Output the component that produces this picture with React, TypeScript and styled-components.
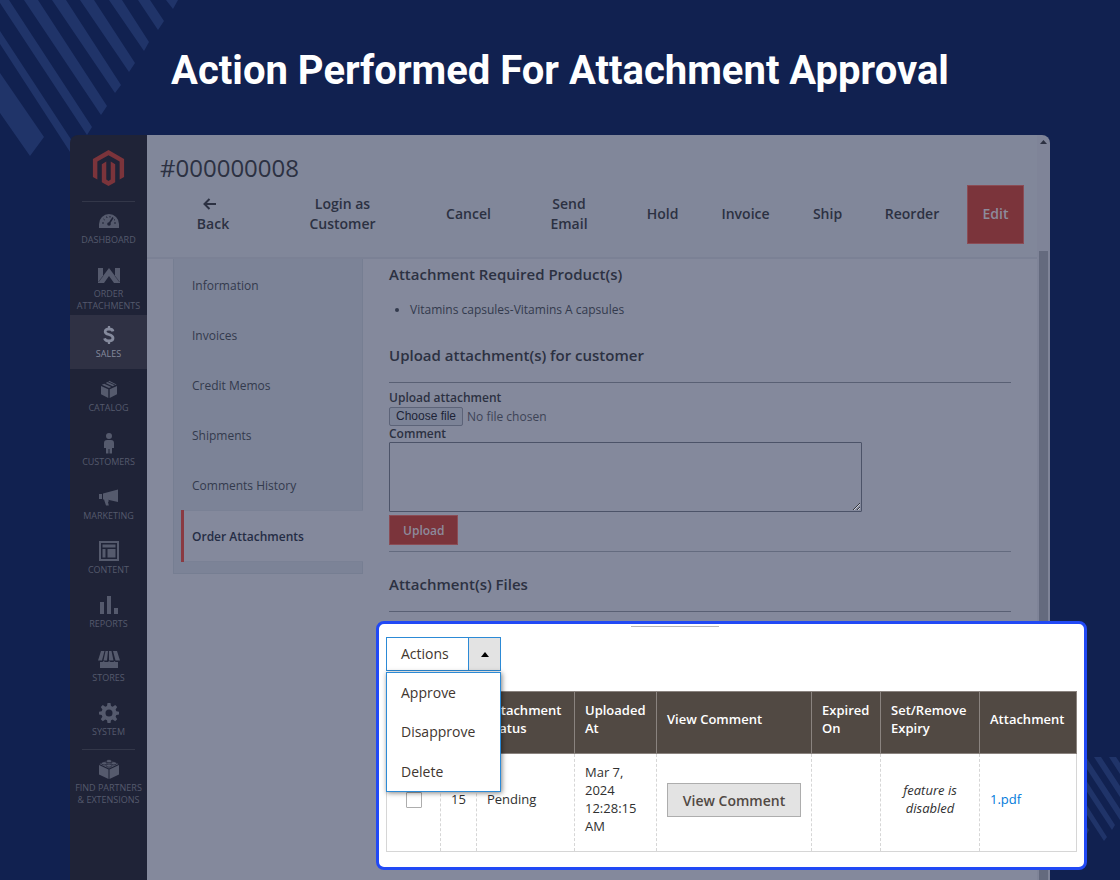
import React from "react";
import styled, { createGlobalStyle } from "styled-components";

const GlobalStyle = createGlobalStyle`
  * { box-sizing: border-box; }
  body { margin: 0; background: #112150; font-family: "Open Sans", "Noto Sans", sans-serif; }
  h1, h2, p, ul { margin: 0; padding: 0; }
  button { font-family: inherit; cursor: pointer; }
  a { text-decoration: none; }
`;

const Page = styled.div`
  position: relative;
  display: flex;
  flex-direction: column;
  min-height: 100vh;
  overflow: hidden;
`;

const Stripes = styled.svg<{ $corner: "start" | "end" }>`
  position: absolute;
  ${(p) => (p.$corner === "start" ? "left: 0; top: 0;" : "right: 0; top: 757px;")}
  fill: #203469;
`;

const Title = styled.h1`
  position: relative;
  padding: 47px 24px 40px;
  font: 700 40px/48px Roboto, sans-serif;
  color: #fff;
  text-align: center;
`;

const Shell = styled.div`
  position: relative;
  flex: 1;
  display: flex;
  margin: 0 70px;
`;

const Sidebar = styled.nav`
  flex: 0 0 77px;
  background: #1f2337;
  border-radius: 8px 0 0 0;
`;

const Logo = styled.a`
  display: flex;
  justify-content: center;
  height: 66px;
  padding-top: 15px;
  color: #7b343b;
`;

const Rule = styled.div`
  height: 1px;
  margin: 0 12px;
  background: #333749;
`;

const MenuItem = styled.a<{ $active?: boolean; $tight?: boolean }>`
  display: flex;
  flex-direction: column;
  align-items: center;
  height: 54px;
  padding-top: ${(p) => (p.$tight ? 3 : 9)}px;
  background: ${(p) => (p.$active ? "#2f3144" : "transparent")};
  color: ${(p) => (p.$active ? "#858a9d" : "#555a6d")};
  font-size: 9px;
  line-height: 12px;
  text-align: center;
  white-space: pre-line;
`;

const IconBox = styled.span`
  display: flex;
  align-items: center;
  height: 22px;
  margin-bottom: 2px;
`;

const MenuGroup = styled.div`
  padding: 5px 0 2px;
`;

const Workspace = styled.div`
  flex: 1;
  min-width: 0;
  background: #84899c;
`;

const Header = styled.header`
  height: 124px;
  padding: 16px 13px 0;
  background: #81879a;
  border-bottom: 2px solid #7b8195;
`;

const OrderTitle = styled.p`
  padding-bottom: 1px;
  font-size: 24px;
  line-height: 33px;
  color: #2c3142;
`;

const Toolbar = styled.div`
  display: flex;
  justify-content: flex-end;
  gap: 13px;
`;

const ToolButton = styled.button<{ $width: number; $primary?: boolean }>`
  display: flex;
  flex-direction: column;
  align-items: center;
  justify-content: center;
  width: ${(p) => p.$width}px;
  height: 59px;
  padding: 0 0 2px;
  border: 1px solid ${(p) => (p.$primary ? "#8b4c55" : "transparent")};
  background: ${(p) => (p.$primary ? "#7b343b" : "transparent")};
  color: ${(p) => (p.$primary ? "#8d8b9b" : "#2c3142")};
  font-size: 14px;
  font-weight: 600;
  line-height: 20px;
  white-space: pre-line;
`;

const ArrowBox = styled.span`
  display: flex;
  align-items: center;
  height: 20px;
  padding-right: 7px;
`;

const Body = styled.div`
  display: flex;
  gap: 26px;
  padding: 0 26px;
`;

const Tabs = styled.nav`
  flex: 0 0 190px;
  align-self: flex-start;
  padding: 1px 0 11px 7px;
  background: #7c8397;
  border: solid #767e92;
  border-width: 0 1px 1px;
`;

const Tab = styled.a<{ $active?: boolean }>`
  display: flex;
  align-items: center;
  height: ${(p) => (p.$active ? 52 : 50)}px;
  margin-right: ${(p) => (p.$active ? -1 : 0)}px;
  padding-left: 8px;
  border-left: 3px solid ${(p) => (p.$active ? "#8a3a42" : "transparent")};
  background: ${(p) => (p.$active ? "#84899c" : "transparent")};
  box-shadow: ${(p) => (p.$active ? "inset 0 1px #7a8195, inset 0 -1px #7a8195" : "none")};
  color: ${(p) => (p.$active ? "#252d45" : "#333a4d")};
  font-size: 12px;
  font-weight: ${(p) => (p.$active ? 600 : 400)};
`;

const Main = styled.main`
  flex: 1;
  min-width: 0;
  padding-top: 4px;
`;

const Heading = styled.h2<{ $ruled?: boolean }>`
  padding-bottom: ${(p) => (p.$ruled ? 16 : 0)}px;
  border-bottom: ${(p) => (p.$ruled ? "1px solid #596074" : "none")};
  color: #2c3142;
  font-size: 15px;
  font-weight: 600;
  line-height: 22px;
`;

const Products = styled.ul`
  margin: 15px 0 24px;
  padding-left: 21px;
  color: #333a4d;
  font-size: 12px;
  line-height: 20px;
`;

const Form = styled.form`
  display: flex;
  flex-direction: column;
  align-items: flex-start;
  margin-bottom: 21px;
  padding: 7px 0 6px;
  border-bottom: 1px solid #646b7f;
`;

const FieldLabel = styled.label`
  color: #2c3142;
  font-size: 12px;
  font-weight: 600;
  line-height: 16px;
`;

const FileRow = styled.div`
  display: flex;
  align-items: center;
  gap: 4px;
  height: 20px;
  color: #3d4356;
  font-size: 12px;
`;

const HiddenFile = styled.input`
  position: absolute;
  width: 1px;
  height: 1px;
  opacity: 0;
`;

const FileButton = styled.label`
  padding: 0 6px;
  border: 1px solid #5c6378;
  border-radius: 2px;
  background: #7c8397;
  color: #1c2338;
  font: 12px/17px "Liberation Sans", Arial, sans-serif;
`;

const CommentBox = styled.textarea`
  width: 76%;
  height: 70px;
  border: 1px solid #4c5368;
  border-radius: 1px;
  background: transparent;
`;

const UploadButton = styled.button`
  height: 30px;
  margin-top: 3px;
  padding: 0 13px;
  border: 1px solid #8b4c55;
  background: #7b343b;
  color: #8d8b9b;
  font-size: 12px;
  font-weight: 600;
`;

const Scrollbar = styled.div`
  display: flex;
  flex-direction: column;
  align-items: center;
  flex: 0 0 13px;
  gap: 107px;
  padding-top: 5px;
  background: #7f8498;
  border-radius: 0 8px 0 0;
`;

const Thumb = styled.div`
  flex: 1;
  width: 9px;
  background: #646a7e;
`;

const Card = styled.section`
  position: absolute;
  left: 306px;
  right: -37px;
  top: 486px;
  height: 249px;
  padding: 2px 9px 0 7px;
  border: 3px solid #2149f5;
  border-radius: 8px;
  background: #fff;
`;

const Handle = styled.div`
  width: 88px;
  height: 1px;
  margin-left: 245px;
  background: #b5b5b5;
`;

const ActionSelect = styled.div`
  position: relative;
  width: 115px;
  margin: 10px 0 20px;
`;

const ActionToggle = styled.button`
  display: flex;
  width: 100%;
  height: 34px;
  padding: 0;
  border: 1px solid #2c8ad6;
  background: #fff;
  color: #41362f;
  font-size: 14px;
  line-height: 32px;
`;

const ActionText = styled.span`
  flex: 1;
  padding-left: 14px;
  text-align: left;
`;

const Caret = styled.span`
  display: flex;
  align-items: center;
  justify-content: center;
  width: 32px;
  border-left: 1px solid #2c8ad6;
  background: #e3e3e3;
`;

const ActionMenu = styled.div`
  position: absolute;
  z-index: 1;
  top: 35px;
  left: 0;
  right: 0;
  display: flex;
  flex-direction: column;
  height: 120px;
  border: 1px solid #2c8ad6;
  background: #fff;
  box-shadow: 1px 1px 5px rgba(0, 0, 0, 0.5);
`;

const ActionOption = styled.button`
  flex: 1;
  padding: 0 14px;
  border: 0;
  background: none;
  color: #41362f;
  font-size: 14px;
  text-align: left;
`;

const Grid = styled.table`
  width: 100%;
  table-layout: fixed;
  border-collapse: collapse;
  border: 1px solid #d6d6d6;
  font-size: 13px;
  line-height: 18px;
  color: #303030;
`;

const HeadCell = styled.th`
  height: 62px;
  padding: 0 10px 8px;
  border: 1px solid #8a837f;
  background: #514943;
  color: #fff;
  font-weight: 600;
  text-align: left;
`;

const Cell = styled.td<{ $align?: string }>`
  height: 98px;
  padding: 0 10px 8px;
  border-left: 1px dashed #d6d6d6;
  text-align: ${(p) => p.$align ?? "left"};
`;

const Check = styled.input`
  appearance: none;
  display: block;
  width: 16px;
  height: 16px;
  margin: 3px auto 0;
  border: 1px solid #adadad;
  border-radius: 1px;
  background: #fff;
`;

const CommentButton = styled.button`
  width: 134px;
  height: 34px;
  margin-top: 3px;
  padding: 0;
  border: 1px solid #adadad;
  background: #e3e3e3;
  color: #514943;
  font-size: 14px;
  font-weight: 600;
`;

const FileLink = styled.a`
  color: #007bdb;
`;

const Svg = ({ w, h, d, box, rule }: { w: number; h: number; d: string; box?: string; rule?: "evenodd" }) => (
  <svg width={w} height={h} viewBox={box ?? `0 0 ${w} ${h}`} fill="currentColor" fillRule={rule} aria-hidden="true">
    <path d={d} />
  </svg>
);

const icons = {
  dashboard: (
    <svg width="20" height="14" viewBox="0 0 20 14" aria-hidden="true">
      <path fill="currentColor" d="M0 14v-4a10 10 0 0 1 20 0v4z" />
      <g stroke="#1f2337" fill="none">
        <path d="M3 9h2M15 9h2M4.500 5l1.200 1M7.500 2.500l.6 1.500M11 2v1.500M16 5.500l-1 .7" />
        <path strokeWidth="1.500" d="M14 3.500 10.500 9" />
      </g>
      <circle cx="10" cy="10" r="1.800" fill="#1f2337" />
    </svg>
  ),
  attachments: (
    <svg width="22" height="15" viewBox="0 0 22 15" aria-hidden="true">
      <path fill="currentColor" d="M0 0h5v8l6-8 6 8V0h5v15h-6l-5-7-5 7H0z" />
      <path stroke="#1f2337" strokeWidth="0.500" fill="none" d="M5 8 .5 14M17 8l4.500 6" />
    </svg>
  ),
  catalog: <Svg w={16} h={18} d="M0 6l7.300 3.300V18L0 14.300zM16 6l-7.300 3.300V18l7.300-3.700zM8 8 .8 4.800 3.200 3.700 10.300 7zM4.700 3 6.500 2l7.200 3.300-2 1zM8.300.8 15.500 4.500l-.6.4L7.300 1.400z" />,
  customers: <Svg w={10} h={21} d="M5 0a3 3 0 1 1 0 6 3 3 0 0 1 0-6zM3 7h4q3 0 3 3v5H8v5.500H5.500V16h-1v4.500H2V15H0v-5q0-3 3-3z" />,
  marketing: <Svg w={20} h={17} d="M0 5h3v5H0zM4 4.500 19 .5v12.500L9 10.800l1 1.200-1 1 .8 3.500H7L5 10.500H4z" />,
  content: <Svg w={20} h={20} rule="evenodd" d="M0 0h20v20H0zM2 2v16h16V2zM3.500 3.500h13v3h-13zM3.500 8h3v8.500h-3zM8.500 8h8v8.500h-8z" />,
  reports: <Svg w={18} h={18} d="M0 6h4v12H0zM7 0h4v18H7zM14 12h4v6h-4z" />,
  stores: <Svg w={22} h={17} d="M3 0h3.500L4 9.500H0zM7.500 0h2.500L9 9.500H5.500zM11 0h2.500l2 9.500H11zM15 0h4l3 9.500h-4.500zM2 11h2.500l1-1 1.500 1h3l1-1 1.500 1h3l1-1 1 1H20v6H2z" />,
  system: <Svg w={20} h={20} rule="evenodd" d="M8.500 0h3l.5 3 1.700.7 2.500-1.700 2 2-1.600 2.500.7 1.700 3 .5v2.800l-3 .5-.7 1.700 1.600 2.500-2 2-2.500-1.700-1.700.8-.5 2.700h-3L8 17.300l-1.700-.8-2.500 1.700-2-2 1.600-2.500-.7-1.700-2.700-.5V8.700l2.700-.5.7-1.700L1.800 4l2-2 2.500 1.700L8 3zM10 6.500a3.500 3.500 0 1 0 0 7 3.500 3.500 0 0 0 0-7z" />,
  partners: (
    <svg width="20" height="20" viewBox="0 0 20 20" aria-hidden="true">
      <path fill="currentColor" d="M0 6l9.500 4.500V20L0 15.500zM20 6l-9.500 4.500V20l9.500-4.500zM10 1l9.500 4-9.500 4.500L.5 5z" />
      <g fill="currentColor" stroke="#1f2337" strokeWidth="0.700">
        <ellipse cx="10" cy="2.100" rx="2.800" ry="1.600" />
        <ellipse cx="5.200" cy="4.300" rx="2.800" ry="1.600" />
        <ellipse cx="14.800" cy="4.300" rx="2.800" ry="1.600" />
        <ellipse cx="10" cy="6.600" rx="2.800" ry="1.600" />
      </g>
    </svg>
  ),
  sales: (
    <svg width="12" height="18" viewBox="0 0 12 18" fill="none" stroke="currentColor" aria-hidden="true">
      <path strokeWidth="2.800" d="M10 5.300C9.500 3.700 8 3 6 3 3.700 3 2.200 4 2.200 5.700 2.200 9.500 10 7.500 10 12c0 2-1.700 3-4 3-2.500 0-4-1-4.500-2.700" />
      <path strokeWidth="2.200" d="M6 0v3.500M6 14.500V18" />
    </svg>
  ),
};

const menu: { label: string; icon: React.ReactNode; active?: boolean; tight?: boolean }[] = [
  { label: "DASHBOARD", icon: icons.dashboard, tight: true },
  { label: "ORDER\nATTACHMENTS", icon: icons.attachments, tight: true },
  { label: "SALES", icon: icons.sales, active: true },
  { label: "CATALOG", icon: icons.catalog },
  { label: "CUSTOMERS", icon: icons.customers },
  { label: "MARKETING", icon: icons.marketing },
  { label: "CONTENT", icon: icons.content },
  { label: "REPORTS", icon: icons.reports },
  { label: "STORES", icon: icons.stores },
  { label: "SYSTEM", icon: icons.system },
];

const tools = [
  { label: "Login as\nCustomer", width: 151 },
  { label: "Cancel", width: 75 },
  { label: "Send\nEmail", width: 100 },
  { label: "Hold", width: 61 },
  { label: "Invoice", width: 79 },
  { label: "Ship", width: 59 },
  { label: "Reorder", width: 84 },
];

const tabs = ["Information", "Invoices", "Credit Memos", "Shipments", "Comments History", "Order Attachments"];

const columns = [
  { id: "select", label: "", width: 54 },
  { id: "number", label: "", width: 36 },
  { id: "status", label: "Attachment Status", width: 98 },
  { id: "uploaded", label: "Uploaded At", width: 82 },
  { id: "comment", label: "View Comment", width: 155 },
  { id: "expired", label: "Expired On", width: 69 },
  { id: "expiry", label: "Set/Remove Expiry", width: 99 },
  { id: "file", label: "Attachment", width: 97 },
];

export default function App() {
  return (
    <Page>
      <GlobalStyle />
      <Stripes $corner="start" width="180" height="160" aria-hidden="true">
        <path d="M0 73 44 137 30 156 0 113zM0 31 78 150 72 155 0 44zM0 0H9L92 127 87 135 0 3zM24 0H38L107 106 101 115zM52 0H66L121 85 115 93zM80 0H94L135 63 129 72zM109 0H122L149 42 144 51zM138 0H150L164 21 158 30zM166 0H178L173 9z" />
      </Stripes>
      <Stripes $corner="end" width="50" height="90" aria-hidden="true">
        <path d="M24 0H31L50 29V40zM39 0H46L50 6V17zM9 0H16L50 52V63zM0 0H1L45 68 42 73 0 9zM0 22 37 80 34 84 0 32zM0 45 19 73 17 77 0 55z" />
      </Stripes>
      <Title>Action Performed For Attachment Approval</Title>
      <Shell>
        <Sidebar>
          <Logo href="#" aria-label="Magento">
            <Svg w={37} h={36} box="0 0 24 24" d="M12 24l-4.455-2.572v-12l2.970-1.715v12.001l1.485.902 1.485-.902V7.713l2.971 1.715v12L12 24zM22.391 6v12l-2.969 1.714V7.713L12 3.430 4.574 7.713v12.001L1.609 18V6L12 0l10.391 6z" />
          </Logo>
          <Rule />
          <MenuGroup>
            {menu.map((m) => (
              <MenuItem key={m.label} href="#" $active={m.active} $tight={m.tight}>
                <IconBox>{m.icon}</IconBox>
                {m.label}
              </MenuItem>
            ))}
          </MenuGroup>
          <Rule />
          <MenuGroup>
            <MenuItem href="#" $tight>
              <IconBox>{icons.partners}</IconBox>
              {"FIND PARTNERS\n& EXTENSIONS"}
            </MenuItem>
          </MenuGroup>
        </Sidebar>
        <Workspace>
          <Header>
            <OrderTitle>#000000008</OrderTitle>
            <Toolbar>
              <ToolButton $width={82}>
                <ArrowBox>
                  <svg width="13" height="12" viewBox="0 0 13 12" fill="none" stroke="currentColor" strokeWidth="2" aria-hidden="true">
                    <path d="M6.500 1 1.500 6l5 5M2 6h11" />
                  </svg>
                </ArrowBox>
                Back
              </ToolButton>
              {tools.map((t) => (
                <ToolButton key={t.label} $width={t.width}>
                  {t.label}
                </ToolButton>
              ))}
              <ToolButton $width={57} $primary>
                Edit
              </ToolButton>
            </Toolbar>
          </Header>
          <Body>
            <Tabs>
              {tabs.map((t) => (
                <Tab key={t} href="#" $active={t === "Order Attachments"}>
                  {t}
                </Tab>
              ))}
            </Tabs>
            <Main>
              <Heading>Attachment Required Product(s)</Heading>
              <Products>
                <li>Vitamins capsules-Vitamins A capsules</li>
              </Products>
              <Heading $ruled>Upload attachment(s) for customer</Heading>
              <Form>
                <FieldLabel htmlFor="file">Upload attachment</FieldLabel>
                <FileRow>
                  <HiddenFile id="file" type="file" />
                  <FileButton htmlFor="file">Choose file</FileButton>
                  No file chosen
                </FileRow>
                <FieldLabel htmlFor="comment">Comment</FieldLabel>
                <CommentBox id="comment" />
                <UploadButton type="button">Upload</UploadButton>
              </Form>
              <Heading $ruled>Attachment(s) Files</Heading>
            </Main>
          </Body>
        </Workspace>
        <Scrollbar aria-hidden="true">
          <svg width="7" height="4" viewBox="0 0 7 4">
            <path fill="#2c3142" d="M3.500 0 7 4H0z" />
          </svg>
          <Thumb />
        </Scrollbar>
        <Card>
          <Handle />
          <ActionSelect>
            <ActionToggle type="button" aria-expanded="true">
              <ActionText>Actions</ActionText>
              <Caret>
                <svg width="8" height="5" viewBox="0 0 8 5" aria-hidden="true">
                  <path d="M4 0 8 5H0z" />
                </svg>
              </Caret>
            </ActionToggle>
            <ActionMenu>
              <ActionOption type="button">Approve</ActionOption>
              <ActionOption type="button">Disapprove</ActionOption>
              <ActionOption type="button">Delete</ActionOption>
            </ActionMenu>
          </ActionSelect>
          <Grid>
            <colgroup>
              {columns.map((c) => (
                <col key={c.id} width={c.width} />
              ))}
            </colgroup>
            <thead>
              <tr>
                {columns.map((c) => (
                  <HeadCell key={c.id}>{c.label}</HeadCell>
                ))}
              </tr>
            </thead>
            <tbody>
              <tr>
                <Cell $align="center">
                  <Check type="checkbox" aria-label="Select attachment 15" />
                </Cell>
                <Cell>15</Cell>
                <Cell>Pending</Cell>
                <Cell>Mar 7, 2024 12:28:15 AM</Cell>
                <Cell>
                  <CommentButton type="button">View Comment</CommentButton>
                </Cell>
                <Cell />
                <Cell $align="center">
                  <em>feature is disabled</em>
                </Cell>
                <Cell>
                  <FileLink href="#">1.pdf</FileLink>
                </Cell>
              </tr>
            </tbody>
          </Grid>
        </Card>
      </Shell>
    </Page>
  );
}
